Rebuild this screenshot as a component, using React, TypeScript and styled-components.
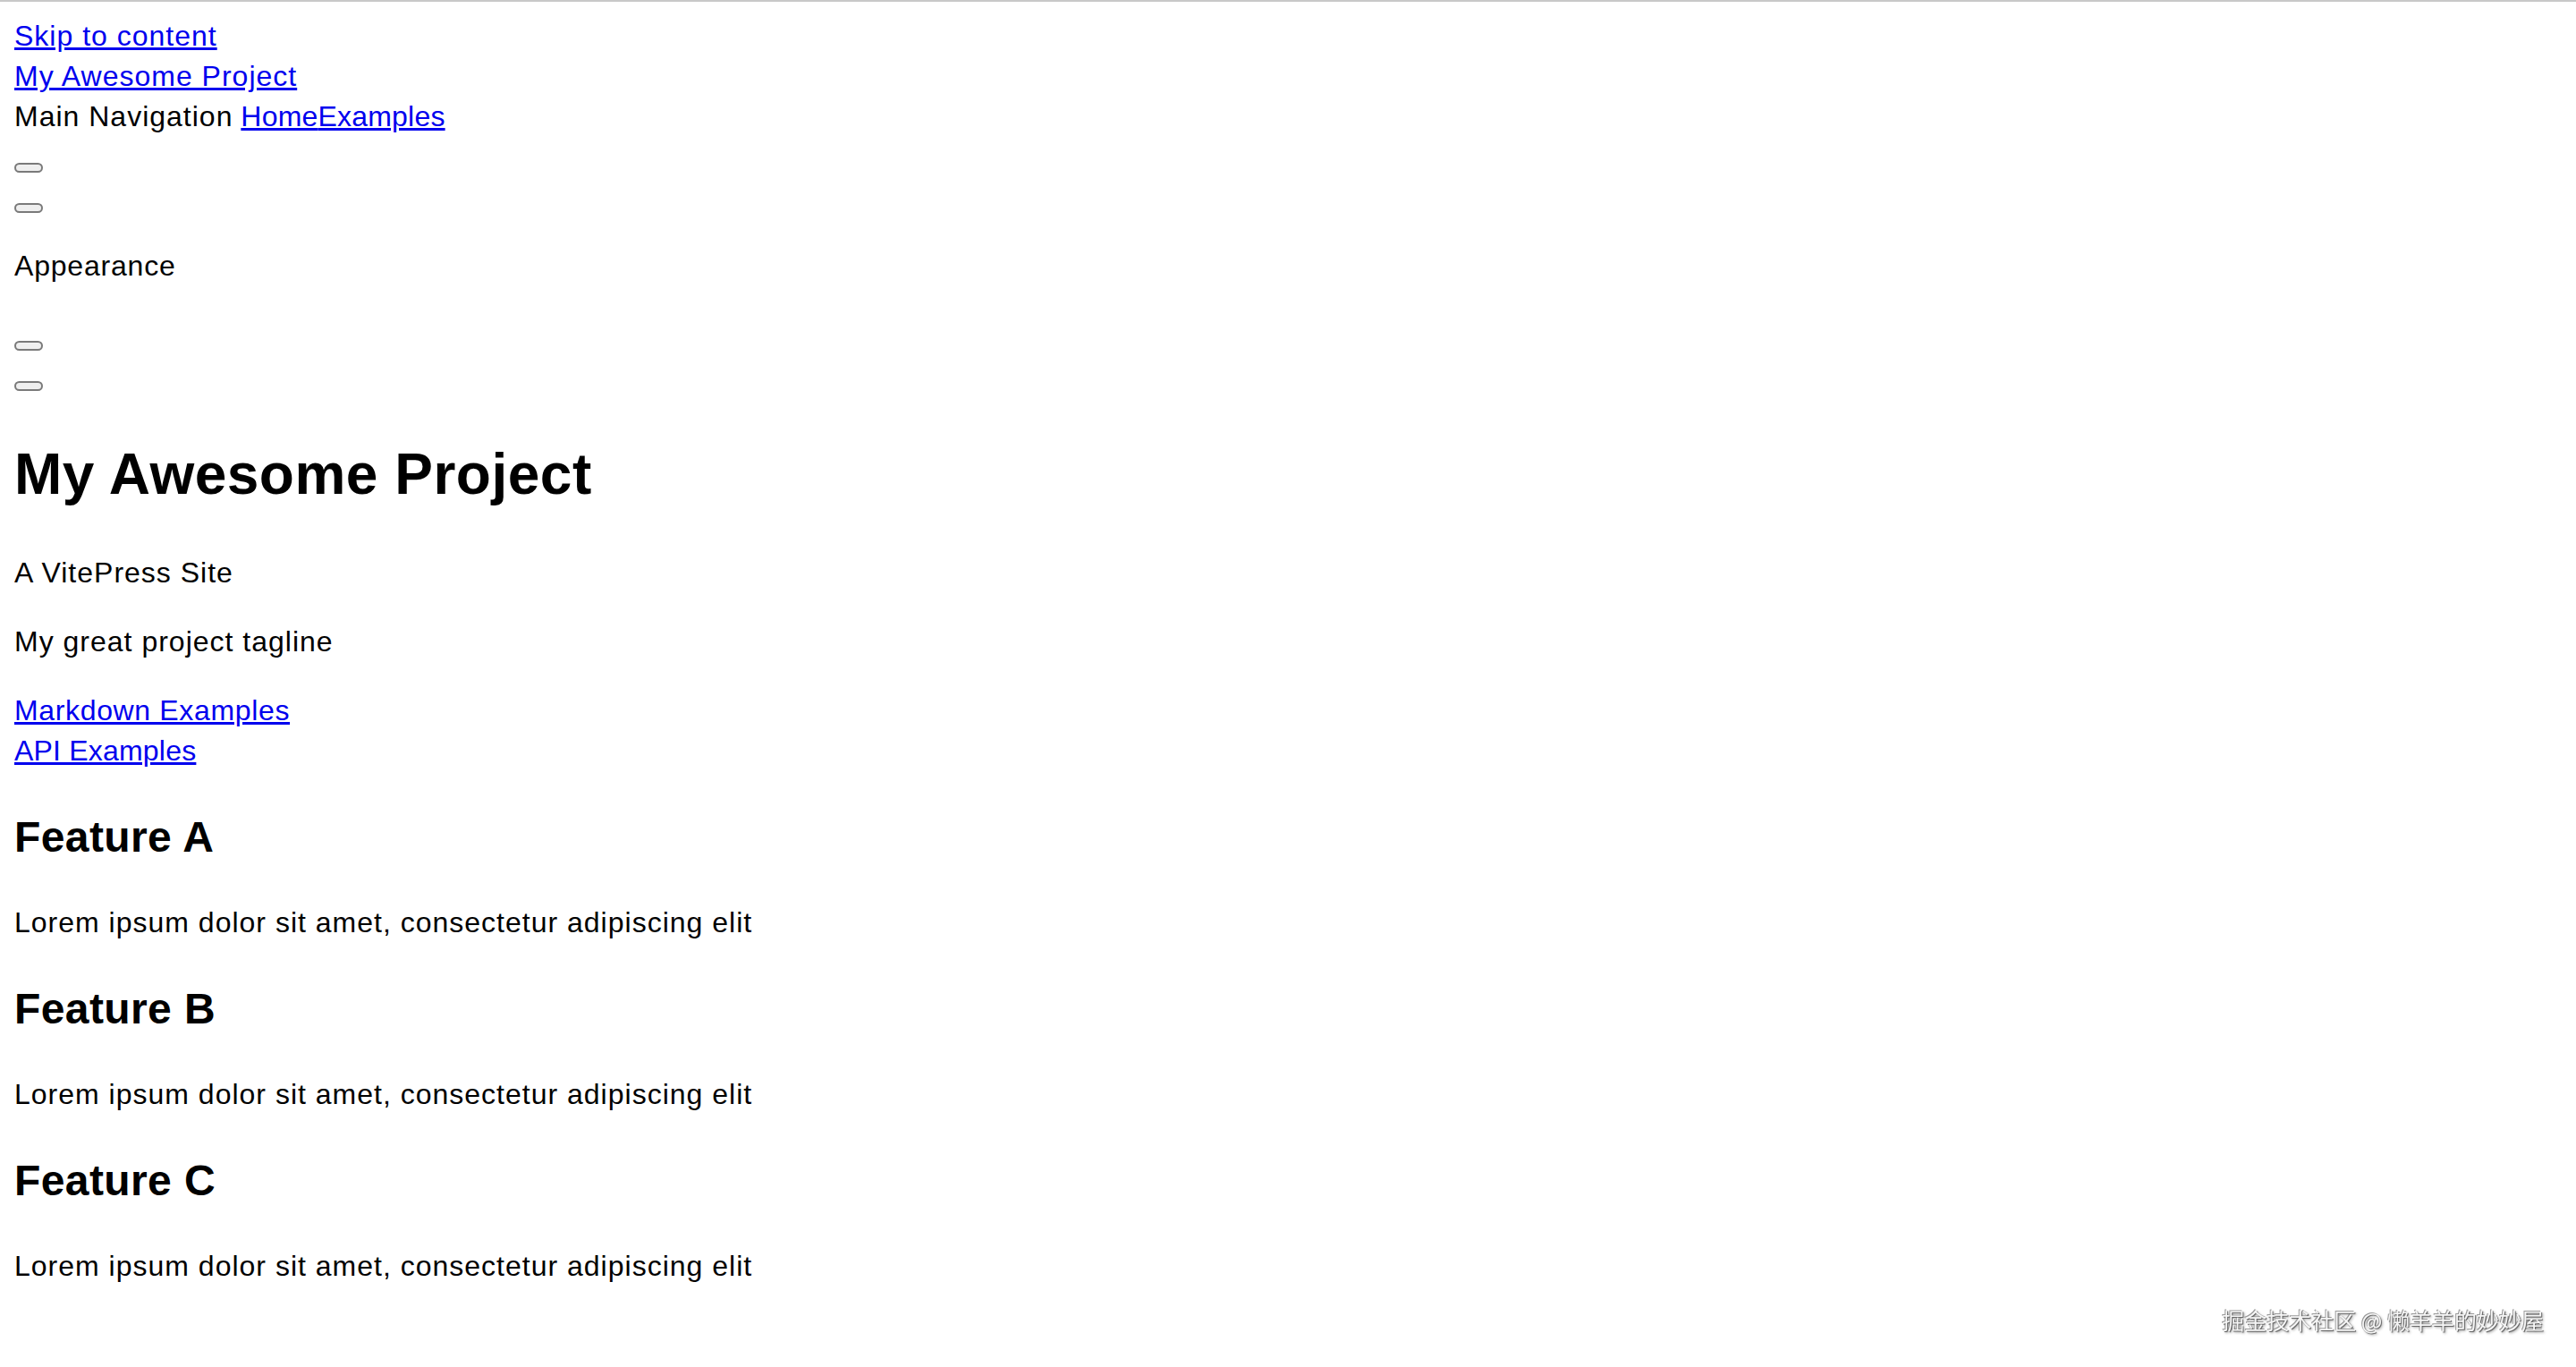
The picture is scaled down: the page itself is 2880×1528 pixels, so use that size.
import React from "react";
import styled, { createGlobalStyle } from "styled-components";

const GlobalStyle = createGlobalStyle`
  html {
    border-top: 2px solid #c8c8c8;
    background: #ffffff;
  }
  body {
    margin: 16px;
    font-family: "Liberation Sans", Arial, "Noto Sans CJK SC", sans-serif;
    font-size: 32px;
    line-height: 45px;
    color: #000000;
  }
`;

const Layout = styled.div`
  display: block;
`;

const TextLink = styled.a<{ $block?: boolean; $spacing?: number }>`
  display: ${(p) => (p.$block ? "block" : "inline")};
  color: #0000ee;
  text-decoration: underline;
  letter-spacing: ${(p) => (p.$spacing ?? 1)}px;
`;

const NavBar = styled.header`
  display: block;
`;

const NavTitle = styled.div`
  display: block;
`;

const MainNav = styled.nav`
  display: block;
`;

const NavLabel = styled.span`
  letter-spacing: 1px;
`;

const SwitchRow = styled.div`
  box-sizing: border-box;
  height: 45px;
  padding-top: 29px;
  display: flex;
  align-items: flex-start;
`;

const SwitchButton = styled.button`
  box-sizing: border-box;
  width: 32px;
  height: 11px;
  padding: 0;
  border: 2px solid #7a7a7a;
  border-radius: 6px;
  background: #efefef;
`;

const MenuLabel = styled.p`
  margin: 32px 0;
  letter-spacing: 0.8px;
`;

const Hero = styled.section`
  display: block;
`;

const HeroTitle = styled.h1`
  margin: 42.88px 0;
  font-size: 64px;
  line-height: 90px;
  font-weight: 700;
  letter-spacing: 0.5px;
`;

const Para = styled.p`
  margin: 32px 0;
  letter-spacing: 1px;
`;

const Actions = styled.div`
  display: block;
`;

const FeatureTitle = styled.h2`
  margin: 39.84px 0;
  font-size: 48px;
  line-height: 67.5px;
  font-weight: 700;
  letter-spacing: 0.4px;
`;

const Watermark = styled.div`
  position: fixed;
  right: 36px;
  bottom: 38px;
  font-family: "Noto Sans CJK SC", "Liberation Sans", sans-serif;
  font-size: 25px;
  line-height: 30px;
  color: #f6f6f6;
  text-shadow: 1px 1px 1px #5a5a5a, -1px -1px 0 #9a9a9a, 2px 2px 3px rgba(0, 0, 0, 0.35);
`;

const features = [
  { title: "Feature A", details: "Lorem ipsum dolor sit amet, consectetur adipiscing elit" },
  { title: "Feature B", details: "Lorem ipsum dolor sit amet, consectetur adipiscing elit" },
  { title: "Feature C", details: "Lorem ipsum dolor sit amet, consectetur adipiscing elit" },
];

export default function App() {
  return (
    <>
      <GlobalStyle />
      <Layout>
        <TextLink $block href="#VPContent">Skip to content</TextLink>
        <NavBar>
          <NavTitle>
            <TextLink href="#">My Awesome Project</TextLink>
          </NavTitle>
          <MainNav>
            <NavLabel>Main Navigation</NavLabel>{" "}
            <TextLink href="#" $spacing={0.2}>Home</TextLink>
            <TextLink href="#" $spacing={0.2}>Examples</TextLink>
          </MainNav>
          <SwitchRow>
            <SwitchButton type="button" aria-label="Switch appearance" />
          </SwitchRow>
          <SwitchRow>
            <SwitchButton type="button" aria-label="Extra navigation" />
          </SwitchRow>
          <MenuLabel>Appearance</MenuLabel>
          <SwitchRow>
            <SwitchButton type="button" aria-label="Toggle dark mode" />
          </SwitchRow>
          <SwitchRow>
            <SwitchButton type="button" aria-label="Mobile navigation" />
          </SwitchRow>
        </NavBar>
        <Hero id="VPContent">
          <HeroTitle>My Awesome Project</HeroTitle>
          <Para>A VitePress Site</Para>
          <Para>My great project tagline</Para>
          <Actions>
            <TextLink $block href="#" $spacing={0.65}>Markdown Examples</TextLink>
            <TextLink $block href="#" $spacing={0.2}>API Examples</TextLink>
          </Actions>
        </Hero>
        {features.map((f) => (
          <section key={f.title}>
            <FeatureTitle>{f.title}</FeatureTitle>
            <Para>{f.details}</Para>
          </section>
        ))}
      </Layout>
      <Watermark>掘金技术社区 @ 懒羊羊的妙妙屋</Watermark>
    </>
  );
}
